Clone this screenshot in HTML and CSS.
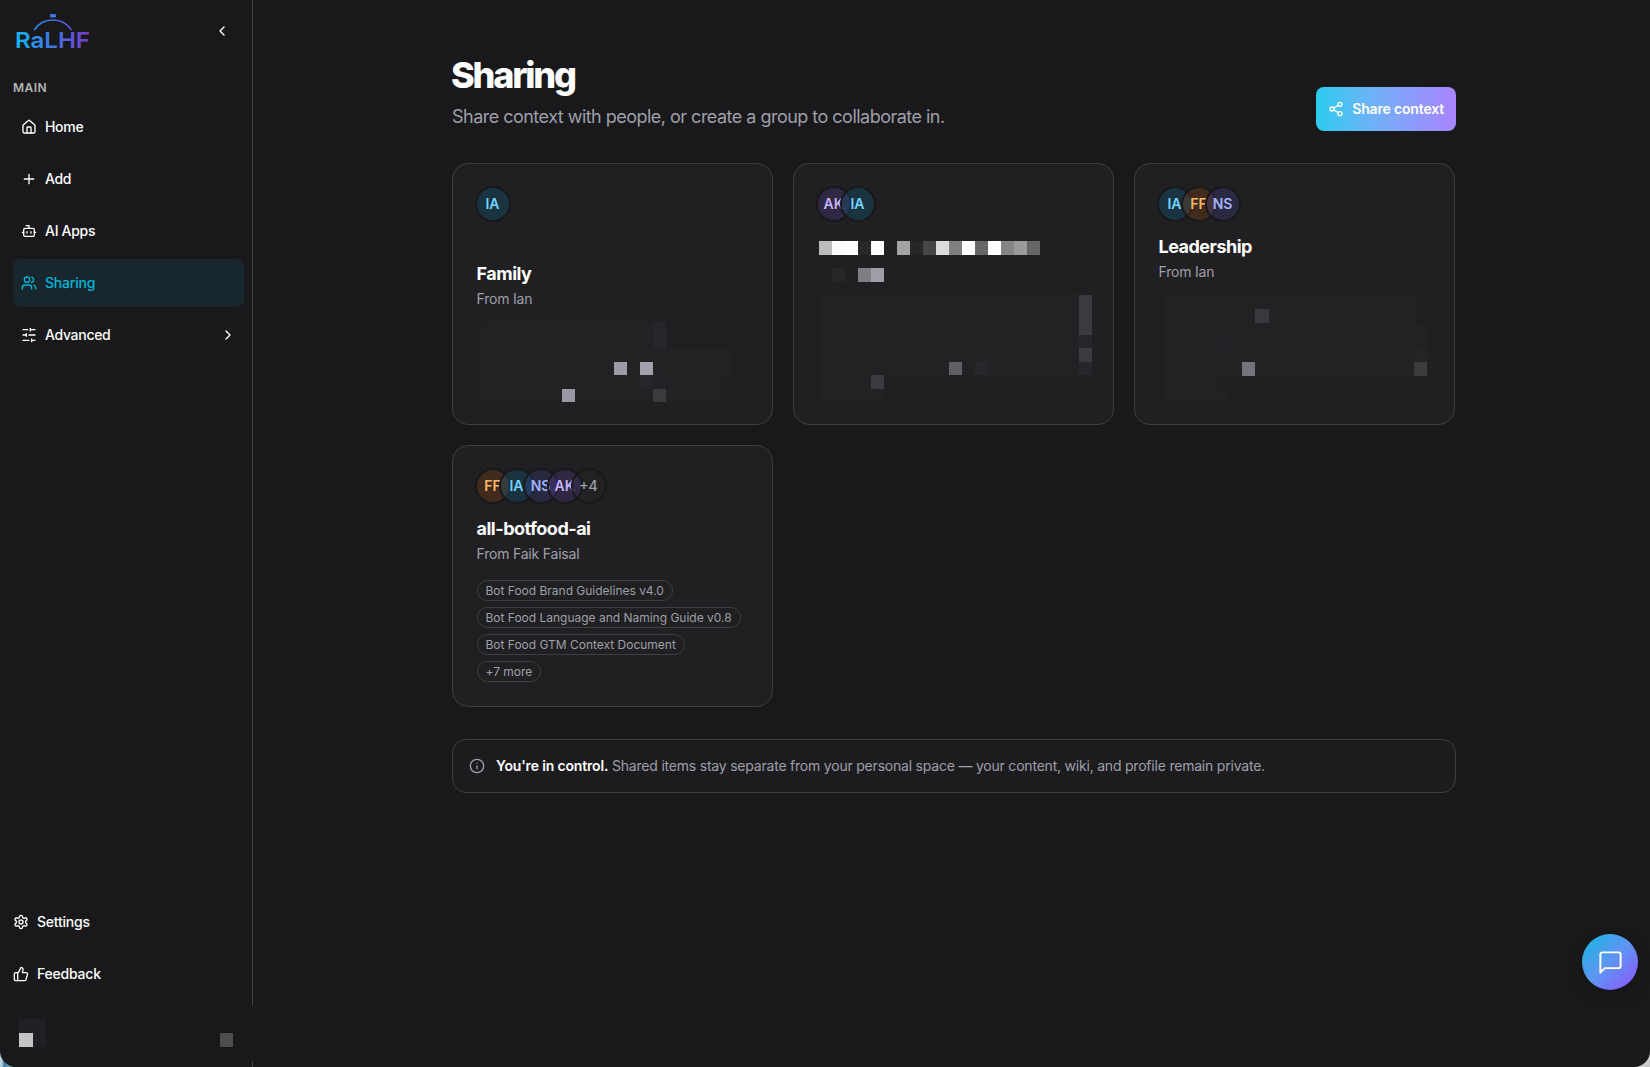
FILE: index.html
```
<!DOCTYPE html>
<html lang="en">
<head>
    <meta charset="UTF-8">
    <title>Sharing - RaLHF</title>
    <link rel="stylesheet" href="styles.css">
</head>
<body>
    <div class="window">
        <!-- Sidebar -->
        <aside class="sidebar">
            <div class="sidebar-panel">
                <div class="sidebar-header">
                    <svg class="logo" width="80" height="42" viewBox="0 0 80 42">
                        <defs>
                            <linearGradient id="logoGradient" gradientUnits="userSpaceOnUse" x1="1" y1="0" x2="75" y2="0">
                                <stop offset="0" stop-color="#14b4f0"/>
                                <stop offset="0.5" stop-color="#3f74e6"/>
                                <stop offset="1" stop-color="#7c3acb"/>
                            </linearGradient>
                        </defs>
                        <rect x="35" y="2" width="6" height="3.500" rx="1.200" fill="url(#logoGradient)"/>
                        <path d="M19.200 18A22.300 22.300 0 0 1 56.500 18" fill="none" stroke="url(#logoGradient)" stroke-width="1.500"/>
                        <text class="logo-text" x="0" y="35.500" textLength="75" lengthAdjust="spacingAndGlyphs" fill="url(#logoGradient)">RaLHF</text>
                    </svg>
                    <svg class="icon collapse" viewBox="0 0 24 24"><path d="m15 18-6-6 6-6"/></svg>
                </div>

                <div class="nav-label">MAIN</div>
                <nav class="nav">
                    <a class="nav-item">
                        <svg class="icon" viewBox="0 0 24 24"><path d="M15 21v-8a1 1 0 0 0-1-1h-4a1 1 0 0 0-1 1v8"/><path d="M3 10a2 2 0 0 1 .709-1.528l7-5.999a2 2 0 0 1 2.582 0l7 5.999A2 2 0 0 1 21 10v9a2 2 0 0 1-2 2H5a2 2 0 0 1-2-2z"/></svg>
                        <span>Home</span>
                    </a>
                    <a class="nav-item">
                        <svg class="icon" viewBox="0 0 24 24"><path d="M5 12h14M12 5v14"/></svg>
                        <span>Add</span>
                    </a>
                    <a class="nav-item">
                        <svg class="icon" viewBox="0 0 24 24"><path d="M12 8V4H8"/><rect x="4" y="8" width="16" height="12" rx="2"/><path d="M2 14h2M20 14h2M15 13v2M9 13v2"/></svg>
                        <span>AI Apps</span>
                    </a>
                    <a class="nav-item active">
                        <svg class="icon" viewBox="0 0 24 24"><path d="M16 21v-2a4 4 0 0 0-4-4H6a4 4 0 0 0-4 4v2"/><circle cx="9" cy="7" r="4"/><path d="M22 21v-2a4 4 0 0 0-3-3.870M16 3.130a4 4 0 0 1 0 7.750"/></svg>
                        <span>Sharing</span>
                    </a>
                    <a class="nav-item">
                        <svg class="icon" viewBox="0 0 24 24"><path d="M21 4h-7M10 4H3M21 12h-9M8 12H3M21 20h-5M12 20H3M14 2v4M8 10v4M16 18v4"/></svg>
                        <span>Advanced</span>
                        <svg class="icon chevron" viewBox="0 0 24 24"><path d="m9 18 6-6-6-6"/></svg>
                    </a>
                </nav>

                <nav class="nav nav-bottom">
                    <a class="nav-item">
                        <svg class="icon" viewBox="0 0 24 24"><path d="M12.220 2h-.440a2 2 0 0 0-2 2v.180a2 2 0 0 1-1 1.730l-.430.250a2 2 0 0 1-2 0l-.150-.080a2 2 0 0 0-2.730.730l-.220.380a2 2 0 0 0 .730 2.730l.150.100a2 2 0 0 1 1 1.720v.510a2 2 0 0 1-1 1.740l-.150.090a2 2 0 0 0-.730 2.730l.220.380a2 2 0 0 0 2.730.730l.150-.080a2 2 0 0 1 2 0l.430.250a2 2 0 0 1 1 1.730V20a2 2 0 0 0 2 2h.440a2 2 0 0 0 2-2v-.180a2 2 0 0 1 1-1.730l.430-.250a2 2 0 0 1 2 0l.150.080a2 2 0 0 0 2.730-.730l.220-.390a2 2 0 0 0-.730-2.730l-.150-.080a2 2 0 0 1-1-1.740v-.500a2 2 0 0 1 1-1.740l.150-.090a2 2 0 0 0 .730-2.730l-.220-.380a2 2 0 0 0-2.730-.730l-.150.080a2 2 0 0 1-2 0l-.430-.250a2 2 0 0 1-1-1.730V4a2 2 0 0 0-2-2z"/><circle cx="12" cy="12" r="3"/></svg>
                        <span>Settings</span>
                    </a>
                    <a class="nav-item">
                        <svg class="icon" viewBox="0 0 24 24"><path d="M7 10v12"/><path d="M15 5.880 14 10h5.830a2 2 0 0 1 1.920 2.560l-2.330 8A2 2 0 0 1 17.500 22H4a2 2 0 0 1-2-2v-8a2 2 0 0 1 2-2h2.760a2 2 0 0 0 1.790-1.110L12 2a3.130 3.130 0 0 1 3 3.880Z"/></svg>
                        <span>Feedback</span>
                    </a>
                </nav>
            </div>

            <!-- Redacted account row -->
            <div class="account">
                <svg class="mosaic" width="252" height="56">
                    <rect x="19" y="14" width="27" height="28" fill="#201f24"/>
                    <rect x="19" y="28" width="14" height="14" fill="#c4c4c4"/>
                    <rect x="220" y="28" width="13" height="14" fill="#4d4d4f"/>
                </svg>
            </div>
            <div class="sidebar-foot"></div>
        </aside>

        <!-- Content -->
        <main class="main">
            <header class="page-header">
                <div>
                    <h1>Sharing</h1>
                    <p class="subtitle">Share context with people, or create a group to collaborate in.</p>
                </div>
                <button class="share-btn">
                    <svg class="icon" viewBox="0 0 24 24"><circle cx="18" cy="5" r="3"/><circle cx="6" cy="12" r="3"/><circle cx="18" cy="19" r="3"/><path d="m8.590 13.510 6.830 3.980M15.410 6.510l-6.820 3.980"/></svg>
                    <span>Share context</span>
                </button>
            </header>

            <section class="cards">
                <article class="card">
                    <div class="avatars"><span class="avatar cyan">IA</span></div>
                    <h2>Family</h2>
                    <p class="from">From Ian</p>
                    <svg class="mosaic" width="269" height="75">
                        <path d="M5-3h171v27h79v26h-13v27H5z" fill="#222224"/>
                        <rect x="176" y="-3" width="13" height="27" fill="#27272b"/>
                        <rect x="137" y="37" width="13" height="13" fill="#9b9ba5"/>
                        <rect x="163" y="37" width="13" height="13" fill="#a1a1ab"/>
                        <rect x="163" y="50" width="13" height="14" fill="#27272b"/>
                        <rect x="176" y="50" width="13" height="14" fill="#232327"/>
                        <rect x="85" y="64" width="13" height="13" fill="#9999a3"/>
                        <rect x="176" y="64" width="13" height="13" fill="#3b3b3d"/>
                    </svg>
                </article>

                <article class="card">
                    <div class="avatars"><span class="avatar purple">AK</span><span class="avatar cyan">IA</span></div>
                    <svg class="mosaic" width="269" height="168">
                        <rect x="1" y="9" width="13" height="14" fill="#bcbcbc"/>
                        <rect x="14" y="9" width="13" height="14" fill="#fcfcfc"/>
                        <rect x="27" y="9" width="13" height="14" fill="#fff"/>
                        <rect x="40" y="9" width="13" height="14" fill="#272729"/>
                        <rect x="53" y="9" width="13" height="14" fill="#fff"/>
                        <rect x="79" y="9" width="13" height="14" fill="#a3a3a3"/>
                        <rect x="92" y="9" width="13" height="14" fill="#262628"/>
                        <rect x="105" y="9" width="13" height="14" fill="#464648"/>
                        <rect x="118" y="9" width="13" height="14" fill="#dcdcdc"/>
                        <rect x="131" y="9" width="13" height="14" fill="#808082"/>
                        <rect x="144" y="9" width="13" height="14" fill="#fff"/>
                        <rect x="157" y="9" width="13" height="14" fill="#666668"/>
                        <rect x="170" y="9" width="13" height="14" fill="#fff"/>
                        <rect x="183" y="9" width="13" height="14" fill="#858585"/>
                        <rect x="196" y="9" width="13" height="14" fill="#9b9b9b"/>
                        <rect x="209" y="9" width="13" height="14" fill="#666668"/>

                        <rect x="14" y="36" width="13" height="14" fill="#262628"/>
                        <rect x="40" y="36" width="13" height="14" fill="#7e7e85"/>
                        <rect x="53" y="36" width="13" height="14" fill="#9e9ea8"/>

                        <path d="M1 63h260v80H66v27H1z" fill="#222224"/>
                        <rect x="261" y="63" width="13" height="40" fill="#3b3b3f"/>
                        <rect x="261" y="103" width="13" height="13" fill="#27272b"/>
                        <rect x="261" y="116" width="13" height="14" fill="#3b3b3f"/>
                        <rect x="261" y="130" width="13" height="13" fill="#27272b"/>
                        <rect x="131" y="130" width="13" height="13" fill="#5f5f65"/>
                        <rect x="157" y="130" width="13" height="13" fill="#27272b"/>
                        <rect x="53" y="143" width="13" height="14" fill="#3c3c40"/>
                    </svg>
                </article>

                <article class="card">
                    <div class="avatars"><span class="avatar cyan">IA</span><span class="avatar orange">FF</span><span class="avatar indigo">NS</span></div>
                    <h2>Leadership</h2>
                    <p class="from">From Ian</p>
                    <svg class="mosaic" width="269" height="102">
                        <path d="M4-2h251v27h13v53H57v14h13v12H4z" fill="#222224"/>
                        <rect x="96" y="11" width="14" height="14" fill="#39393d"/>
                        <rect x="57" y="38" width="13" height="13" fill="#222125"/>
                        <rect x="83" y="64" width="13" height="14" fill="#74747d"/>
                        <rect x="255" y="51" width="13" height="13" fill="#242426"/>
                        <rect x="255" y="64" width="13" height="14" fill="#3b3b3d"/>
                    </svg>
                </article>

                <article class="card">
                    <div class="avatars"><span class="avatar orange">FF</span><span class="avatar cyan">IA</span><span class="avatar indigo">NS</span><span class="avatar purple">AK</span><span class="avatar more">+4</span></div>
                    <h2>all-botfood-ai</h2>
                    <p class="from">From Faik Faisal</p>
                    <div class="chips">
                        <span class="chip">Bot Food Brand Guidelines v4.0</span>
                        <span class="chip">Bot Food Language and Naming Guide v0.8</span>
                        <span class="chip">Bot Food GTM Context Document</span>
                        <span class="chip">+7 more</span>
                    </div>
                </article>
            </section>

            <div class="notice">
                <svg class="icon" viewBox="0 0 24 24"><circle cx="12" cy="12" r="10"/><path d="M12 16v-4M12 8h.010"/></svg>
                <p><strong>You're in control.</strong> Shared items stay separate from your personal space — your content, wiki, and profile remain private.</p>
            </div>
        </main>

        <button class="chat-btn">
            <svg class="icon" viewBox="0 0 24 24"><path d="M21 15a2 2 0 0 1-2 2H7l-4 4V5a2 2 0 0 1 2-2h14a2 2 0 0 1 2 2z"/></svg>
        </button>
    </div>
</body>
</html>
```
FILE: styles.css
```
* {
    box-sizing: border-box;
}

body {
    margin: 0;
    height: 100vh;
    overflow: hidden;
    background: linear-gradient(90deg, #b9cfdc 0, #b9cfdc 2px, #3a78a4 4px, #6fa0c0 8px, #2d6690 14px, #c9c9cb 50%);
    font-family: Inter, "Liberation Sans", sans-serif;
    font-size: 14px;
    letter-spacing: -0.2px;
    color: #fff;
}

h1, h2, p {
    margin: 0;
}

button {
    border: none;
    padding: 0;
    color: #fff;
    font-family: inherit;
}

.window {
    display: flex;
    height: 100vh;
    background: #19191b;
    border-radius: 0 0 16px 16px;
    overflow: hidden;
}

.icon {
    width: 16px;
    height: 16px;
    flex-shrink: 0;
    fill: none;
    stroke: currentColor;
    stroke-width: 2;
    stroke-linecap: round;
    stroke-linejoin: round;
}

.mosaic {
    display: block;
    overflow: visible;
    shape-rendering: crispEdges;
}

/* Sidebar */
.sidebar {
    display: flex;
    flex-direction: column;
    width: 253px;
    flex-shrink: 0;
}

.sidebar-panel {
    display: flex;
    flex-direction: column;
    flex: 1;
    padding: 12px 8px 7px 13px;
    border-right: 1px solid #414144;
}

.sidebar-header {
    display: flex;
    justify-content: space-between;
    height: 38px;
    padding: 0 14px 0 2px;
}

.logo {
    overflow: visible;
}

.logo-text {
    font-size: 22px;
    font-weight: 600;
    letter-spacing: 0;
}

.collapse {
    margin-top: 11px;
}

.nav-label {
    margin-top: 30px;
    font-size: 12px;
    line-height: 16px;
    font-weight: 600;
    letter-spacing: 0.5px;
    color: #b4b4b6;
}

.nav {
    display: flex;
    flex-direction: column;
    gap: 4px;
    margin-top: 7px;
}

.nav-item {
    display: flex;
    align-items: center;
    gap: 8px;
    height: 48px;
    padding: 0 8px;
    border-radius: 8px;
    font-weight: 500;
    letter-spacing: -0.3px;
}

.nav-item span {
    padding-bottom: 2px;
}

.nav-item.active {
    background: #18272d;
    color: #00b5d6;
    letter-spacing: -0.2px;
}

.chevron {
    margin-left: auto;
}

.nav-bottom {
    margin-top: auto;
}

.nav-bottom .nav-item {
    padding: 0;
    letter-spacing: -0.22px;
}

.account {
    height: 56px;
}

.sidebar-foot {
    height: 6px;
    border-right: 1px solid #414144;
}

/* Main column */
.main {
    width: 1004px;
    margin-left: 199px;
    padding-top: 55px;
}

.page-header {
    display: flex;
    justify-content: space-between;
    align-items: flex-end;
    height: 76px;
}

.page-header h1 {
    margin-left: -1px;
    font-size: 36px;
    line-height: 40px;
    font-weight: 800;
    letter-spacing: -2.2px;
}

.subtitle {
    margin-top: 8px;
    font-size: 18px;
    line-height: 28px;
    letter-spacing: -0.52px;
    color: #9f9fa9;
}

.share-btn {
    display: flex;
    align-items: center;
    gap: 8px;
    height: 44px;
    padding: 0 12px;
    border-radius: 8px;
    background: linear-gradient(90deg, #2bcbee, #6fb2f8 40%, #a884ff);
    font-size: 14px;
    font-weight: 600;
    letter-spacing: -0.17px;
}

.share-btn span {
    padding-bottom: 1px;
}

.cards {
    display: grid;
    grid-template-columns: repeat(3, 321px);
    grid-auto-rows: 262px;
    gap: 20px;
    margin-top: 32px;
}

.card {
    display: flex;
    flex-direction: column;
    padding: 24px;
    background: #202022;
    border: 1px solid #3e3e41;
    border-radius: 16px;
}

.card h2 {
    margin-left: -0.5px;
    font-size: 18px;
    line-height: 28px;
    font-weight: 700;
    letter-spacing: -0.5px;
}

.from {
    margin: 1px 0 16px -0.5px;
    line-height: 20px;
    color: #9f9fa9;
}

.avatars {
    display: flex;
    margin-bottom: auto;
}

.avatar {
    display: flex;
    align-items: center;
    justify-content: center;
    width: 32px;
    height: 32px;
    padding: 0 1px 1px 0;
    border-radius: 50%;
    box-shadow: 0 0 0 2px #19191b;
    font-weight: 600;
    letter-spacing: 0;
}

.avatar + .avatar {
    margin-left: -8px;
}

.cyan {
    background: rgba(0, 132, 184, 0.2);
    color: #74d4ff;
}

.purple {
    background: rgba(142, 81, 255, 0.15);
    color: #c4b4ff;
}

.orange {
    background: rgba(255, 105, 0, 0.15);
    color: #ffb86a;
}

.indigo {
    background: rgba(97, 95, 255, 0.15);
    color: #a3b3ff;
}

.more {
    background: rgba(255, 255, 255, 0.01);
    color: #9f9fa9;
    font-weight: 500;
}

.chips {
    display: flex;
    flex-direction: column;
    align-items: flex-start;
    gap: 6px;
}

.chip {
    height: 21px;
    padding: 0 8px 0 7.5px;
    border: 1px solid #3f3f43;
    border-radius: 11px;
    font-size: 12px;
    line-height: 19px;
    letter-spacing: -0.01px;
    color: #9f9fa9;
}

.notice {
    display: flex;
    align-items: center;
    gap: 11px;
    height: 54px;
    margin-top: 32px;
    padding: 0 16px;
    background: #1c1c1e;
    border: 1px solid #3e3e41;
    border-radius: 14px;
    color: #9f9fa9;
}

.notice p {
    padding-bottom: 2px;
    letter-spacing: -0.21px;
}

.notice strong {
    color: #fff;
    font-weight: 600;
    letter-spacing: -0.16px;
}

/* Floating chat button */
.chat-btn {
    position: fixed;
    right: 12px;
    bottom: 77px;
    display: flex;
    align-items: center;
    justify-content: center;
    width: 56px;
    height: 56px;
    border-radius: 50%;
    background: linear-gradient(135deg, #14b8e0, #5f95f2 50%, #8e51ff);
    box-shadow: 0 6px 14px rgba(0, 0, 0, 0.15);
}

.chat-btn .icon {
    width: 27px;
    height: 27px;
    stroke-width: 1.75;
}
```
